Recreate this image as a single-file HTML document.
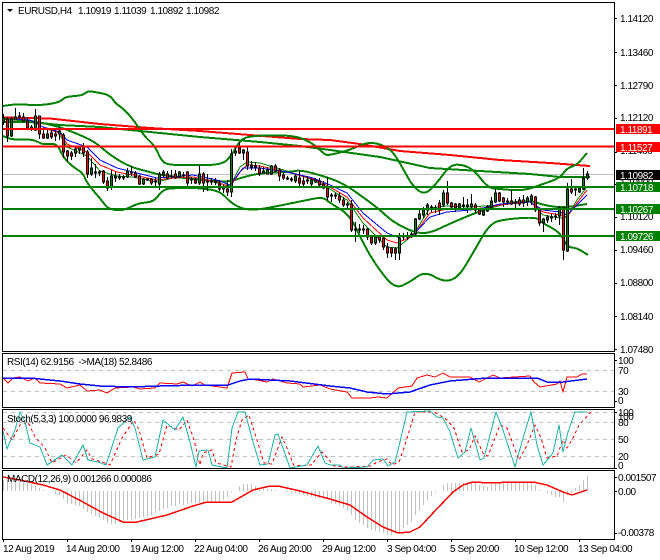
<!DOCTYPE html>
<html>
<head>
<meta charset="utf-8">
<style>
html,body{margin:0;padding:0;background:#fff}
svg{display:block}
text{font-family:"Liberation Sans",sans-serif;font-size:10px;letter-spacing:-.45px;fill:#000}
.l{fill:#fff}
</style>
</head>
<body>
<svg width="660" height="560" viewBox="0 0 660 560" xmlns="http://www.w3.org/2000/svg">
<rect width="660" height="560" fill="#fff"/>

<!-- bid line -->
<path d="M3 174.500H614" stroke="#c0c0c0" stroke-width="1" shape-rendering="crispEdges"/>

<g fill="none" stroke-linejoin="round" shape-rendering="crispEdges">
<!-- long MAs -->
<path stroke="#f00" stroke-width="2" d="M3 117.500L50 118.500 100 124 150 128 200 131 250 135 300 139 330 140 360 144 400 151 450 155 500 160 550 163 590 166"/>
<path stroke="#008000" stroke-width="2" d="M3 122L30 122 60 125 100 127 130 130 200 137 260 142 300 146 330 150 380 157 430 168 480 171 530 174 560 177 590 177"/>
<!-- Bollinger -->
<path stroke="#008000" stroke-width="2" d="M3 106Q15 104 22.500 104.500Q30 105 37.500 105Q45 105 52.500 103.500Q60 102 62.500 99.500Q65 97 70 96.500Q75 96 79 95.500Q83 95 85.500 93Q88 91 91.500 91.500Q95 92 102.500 93.500Q110 95 112.500 99Q115 103 120 106.500Q125 110 130 116Q135 122 140 129.500Q145 137 150 141.500Q155 146 158.500 154Q162 162 166 163.500Q170 165 180 165Q190 165 206 165Q222 165 227 160Q232 155 236 147.500Q240 140 245 138Q250 136 265 135.500Q280 135 290 136Q300 137 307.500 141Q315 145 320 150Q325 155 327.500 155Q330 155 340 152.500Q350 150 360 145.500Q370 141 380 144.500Q390 148 395 155.500Q400 163 406.500 175Q413 187 419 191Q425 195 431 189Q437 183 443.500 174Q450 165 456.500 164.700Q463 164.500 469 167.700Q475 171 481.500 179.500Q488 188 494 188.500Q500 189 511.500 190Q523 191 533 187.500Q543 184 551.500 181Q560 178 563.500 173Q567 168 572 166.500Q577 165 582 159L587 153"/>
<path stroke="#008000" stroke-width="2" d="M3 119Q30 120 45 123.500Q60 127 65 129Q70 131 75 133Q80 135 87.500 138.500Q95 142 102.500 148.500Q110 155 120 161Q130 167 140 169.500Q150 172 155 173.500Q160 175 180 177.500Q200 180 215 181Q230 182 235 180Q240 178 250 175.500Q260 173 275 172.500Q290 172 295 171Q300 170 310 172.500Q320 175 331.500 179Q343 183 355 191.500Q367 200 373.500 205Q380 210 386.500 216Q393 222 404 227.500Q415 233 422.500 233Q430 233 438.500 229Q447 225 458.500 220Q470 215 483.500 210Q497 205 513.500 202.500Q530 200 536.500 202.500Q543 205 553 206.500Q563 208 575 206L587 204"/>
<path stroke="#008000" stroke-width="2" d="M3 136Q10 140 21.500 139.500Q33 139 38 142Q43 145 50 144Q57 143 60 150Q63 157 68 162Q73 167 78 170Q83 173 85 178Q87 183 92 189Q97 195 100 198.500Q103 202 105.500 205.500Q108 209 115.500 210Q123 211 130.500 207Q138 203 146 202.500Q154 202 158.500 195.500Q163 189 170 188.500Q177 188 188.500 188Q200 188 210 189.500Q220 191 225 196.500Q230 202 236 205.500Q242 209 249.500 209.500Q257 210 270 207.500Q283 205 295 202.500Q307 200 315 198.500Q323 197 326.500 200Q330 203 340 209Q350 215 356.500 229Q363 243 370 255Q377 267 386 278Q395 289 402.500 285.500Q410 282 417.500 276.500Q425 271 434 276.500Q443 282 450.500 280Q458 278 465.500 265.500Q473 253 481.500 238Q490 223 498.500 221Q507 219 522 218Q537 217 539.500 220Q542 223 551 227.500Q560 232 563.500 239.500Q567 247 572 247.500Q577 248 582.500 251.500L588 255"/>
<!-- thin MAs -->
<path stroke="#008000" stroke-width="1" d="M60 135L67 147 87 156 100 171 117 176 133 177 157 182 173 178 193 177 217 183 230 186 240 167 247 162 260 163 287 171 313 180 330 189 347 200 363 223 387 247 397 248 413 235 430 208 447 206 470 207 500 205 530 201 543 215 560 218 567 217 577 200 587 187"/>
<path stroke="#f00" stroke-width="1" d="M43 128L60 133 67 144 87 152 100 165 117 172 133 175 157 180 173 178 193 177 217 182 230 187 240 172 247 165 260 166 287 172 313 179 330 187 347 197 363 218 387 240 397 243 413 236 430 213 447 209 470 209 483 208 500 205 530 202 543 212 560 215 567 217 577 203 587 190"/>
<path stroke="#00f" stroke-width="1" d="M15 119L30 120 43 127 60 132 67 140 87 147 100 160 117 168 133 172 157 178 173 177 193 175 217 180 230 185 243 168 260 168 287 172 313 178 330 185 347 193 363 213 387 233 397 237 413 235 430 217 447 212 470 210 483 208 500 204 530 202 543 210 560 212 567 215 577 205 587 195"/>
</g>

<!-- candle wicks -->
<path fill="none" stroke="#000" stroke-width="1" shape-rendering="crispEdges" d="M3.500 114V125M7.500 117V142M11.500 117V137M15.500 108V120M19.500 112V119M23.500 113V122M27.500 117V130M31.500 125V131M35.500 109V131M39.500 116V139M43.500 128V139M47.500 128V139M51.500 130V139M55.500 131V141M59.500 127V140M63.500 133V158M67.500 150V162M71.500 151V160M75.500 146V157M79.500 146V154M83.500 143V157M87.500 150V178M91.500 158V176M95.500 164V178M99.500 170V176M103.500 170V184M107.500 177V191M111.500 170V190M115.500 172V182M119.500 174V180M123.500 175V180M127.500 168V178M131.500 166V176M135.500 171V178M139.500 175V185M143.500 178V185M147.500 178V181M151.500 178V185M155.500 178V186M159.500 172V190M163.500 170V177M167.500 171V179M171.500 170V178M175.500 170V179M179.500 171V178M183.500 172V178M187.500 171V186M191.500 177V184M195.500 178V184M199.500 165V185M203.500 172V192M207.500 174V191M211.500 178V185M215.500 178V185M219.500 180V191M223.500 185V193M227.500 180V196M231.500 149V197M235.500 148V156M239.500 142V154M243.500 149V160M247.500 147V170M251.500 161V170M255.500 162V171M259.500 165V176M263.500 167V173M267.500 167V174M271.500 165V175M275.500 164V172M279.500 168V181M283.500 173V180M287.500 176V180M291.500 177V182M295.500 174V183M299.500 170V187M303.500 176V186M307.500 176V184M311.500 178V186M315.500 178V183M319.500 178V186M323.500 181V189M327.500 177V200M331.500 193V202M335.500 193V199M339.500 193V203M343.500 197V207M347.500 202V209M351.500 200V232M355.500 222V242M359.500 224V233M363.500 225V234M367.500 228V240M371.500 235V245M375.500 235V245M379.500 235V243M383.500 236V250M387.500 243V258M391.500 247V257M395.500 247V260M399.500 233V260M403.500 233V240M407.500 232V240M411.500 232V238M415.500 218V236M419.500 210V220M423.500 207V218M427.500 203V215M431.500 205V212M435.500 205V213M439.500 200V215M443.500 190V207M447.500 181V205M451.500 202V208M455.500 203V212M459.500 203V209M463.500 197V208M467.500 199V213M471.500 194V208M475.500 203V213M479.500 208V215M483.500 209V216M487.500 205V212M491.500 197V210M495.500 189V203M499.500 192V202M503.500 197V207M507.500 198V205M511.500 190V205M515.500 199V208M519.500 197V206M523.500 195V207M527.500 196V206M531.500 194V205M535.500 196V212M539.500 208V226M543.500 218V232M547.500 215V223M551.500 214V222M555.500 213V220M559.500 206V225M563.500 207V260M567.500 183V252M571.500 179V194M575.500 188V196M579.500 187V193M583.500 168V190M587.500 171V180"/>

<!-- red bodies -->
<path fill="#f00" stroke="#000" stroke-width="1" shape-rendering="crispEdges" d="M6.500 119h2v17h-2zM22.500 117h2v4h-2zM26.500 121h2v7h-2zM38.500 116h2v18h-2zM42.500 134h2v4h-2zM50.500 133h2v4h-2zM54.500 134h2v2h-2zM62.500 135h2v17h-2zM66.500 151h2v5h-2zM70.500 153h2v3h-2zM82.500 147h2v6h-2zM86.500 152h2v22h-2zM102.500 171h2v11h-2zM106.500 181h2v7h-2zM134.500 173h2v4h-2zM138.500 176h2v8h-2zM150.500 179h2v4h-2zM166.500 174h2v4h-2zM174.500 174h2v4h-2zM186.500 172h2v11h-2zM194.500 180h2v3h-2zM202.500 174h2v9h-2zM218.500 184h2v5h-2zM226.500 189h2v3h-2zM238.500 148h2v5h-2zM246.500 152h2v14h-2zM258.500 168h2v6h-2zM274.500 166h2v5h-2zM278.500 170h2v6h-2zM282.500 175h2v3h-2zM298.500 178h2v5h-2zM302.500 181h2v3h-2zM318.500 181h2v4h-2zM322.500 184h2v4h-2zM326.500 188h2v9h-2zM338.500 196h2v4h-2zM342.500 200h2v5h-2zM350.500 204h2v26h-2zM366.500 229h2v8h-2zM370.500 237h2v6h-2zM378.500 237h2v3h-2zM382.500 238h2v9h-2zM386.500 247h2v6h-2zM390.500 248h2v5h-2zM394.500 249h2v4h-2zM438.500 203h2v7h-2zM446.500 193h2v10h-2zM450.500 203h2v4h-2zM454.500 204h2v4h-2zM474.500 205h2v5h-2zM478.500 210h2v4h-2zM498.500 193h2v8h-2zM502.500 198h2v4h-2zM510.500 201h2v3h-2zM518.500 200h2v4h-2zM522.500 200h2v3h-2zM534.500 197h2v13h-2zM538.500 210h2v13h-2zM562.500 208h2v42h-2zM570.500 189h2v3h-2z"/>

<!-- green bodies -->
<path fill="#008000" stroke="#000" stroke-width="1" shape-rendering="crispEdges" d="M2.500 118h2v4h-2zM10.500 119h2v17h-2zM14.500 117h2v3h-2zM18.500 116h2v1h-2zM30.500 127h2v2h-2zM34.500 116h2v14h-2zM46.500 134h2v4h-2zM58.500 131h2v3h-2zM74.500 149h2v4h-2zM78.500 147h2v3h-2zM90.500 168h2v6h-2zM94.500 172h2v1h-2zM98.500 172h2v1h-2zM110.500 176h2v11h-2zM114.500 176h2v2h-2zM118.500 177h2v1h-2zM122.500 177h2v1h-2zM126.500 171h2v6h-2zM130.500 172h2v1h-2zM142.500 179h2v5h-2zM146.500 179h2v1h-2zM154.500 181h2v1h-2zM158.500 174h2v10h-2zM162.500 172h2v3h-2zM170.500 176h2v1h-2zM178.500 172h2v5h-2zM182.500 175h2v1h-2zM190.500 179h2v1h-2zM198.500 174h2v9h-2zM206.500 181h2v1h-2zM210.500 181h2v1h-2zM214.500 181h2v1h-2zM222.500 187h2v2h-2zM230.500 154h2v38h-2zM234.500 151h2v2h-2zM242.500 150h2v3h-2zM250.500 165h2v2h-2zM254.500 166h2v1h-2zM262.500 171h2v2h-2zM266.500 170h2v4h-2zM270.500 166h2v8h-2zM286.500 178h2v1h-2zM290.500 179h2v1h-2zM294.500 176h2v5h-2zM306.500 180h2v1h-2zM310.500 180h2v4h-2zM314.500 180h2v2h-2zM330.500 195h2v1h-2zM334.500 195h2v1h-2zM346.500 204h2v1h-2zM354.500 229h2v1h-2zM358.500 229h2v1h-2zM362.500 229h2v1h-2zM374.500 237h2v6h-2zM398.500 238h2v15h-2zM402.500 236h2v1h-2zM406.500 236h2v1h-2zM410.500 234h2v1h-2zM414.500 219h2v15h-2zM418.500 214h2v5h-2zM422.500 210h2v5h-2zM426.500 205h2v5h-2zM430.500 207h2v1h-2zM434.500 208h2v1h-2zM442.500 193h2v12h-2zM458.500 204h2v4h-2zM462.500 205h2v1h-2zM466.500 205h2v1h-2zM470.500 204h2v3h-2zM482.500 211h2v4h-2zM486.500 207h2v4h-2zM490.500 201h2v6h-2zM494.500 193h2v9h-2zM506.500 201h2v1h-2zM514.500 202h2v1h-2zM526.500 198h2v4h-2zM530.500 196h2v4h-2zM542.500 219h2v4h-2zM546.500 217h2v3h-2zM550.500 217h2v1h-2zM554.500 216h2v1h-2zM558.500 208h2v8h-2zM566.500 189h2v62h-2zM574.500 189h2v1h-2zM578.500 188h2v4h-2zM582.500 178h2v11h-2zM586.500 174h2v4h-2z"/>

<!-- horizontal levels -->
<g stroke-width="2" shape-rendering="crispEdges">
<path stroke="#f00" d="M3 129H614M3 146.500H614"/>
<path stroke="#008000" d="M3 187H614M3 209H614M3 236H614"/>
</g>

<!-- RSI -->
<path d="M3 370.500H614M3 391.500H614" stroke="#c0c0c0" stroke-dasharray="4 4" shape-rendering="crispEdges"/>
<g fill="none" stroke-linejoin="round" shape-rendering="crispEdges">
<path stroke="#f00" d="M3 378L8 383 13 378 20 377 28 381 35 378 40 383 60 384 67 388 80 385 87 391 100 390 107 393 115 388 133 387 140 389 155 388 160 383 177 384 183 382 192 386 200 382 205 385 227 388 232 373 245 372 248 379 257 380 267 382 273 379 287 383 300 384 303 387 320 385 330 389 347 392 352 398 370 398 378 397 387 398 398 388 412 386 417 378 427 375 435 377 443 373 450 377 470 377 479 382 493 375 500 378 530 376 534 382 540 387 557 384 560 381 563 392 567 377 577 377 582 374 587 374"/>
<path stroke="#00f" stroke-width="1.500" d="M3 378L30 378 60 381 80 384 100 386 130 387 160 386 200 385 228 385 240 381 250 379 290 381 330 386 350 388 367 392 387 394 410 392 430 385 450 381 487 378 537 378 547 382 563 382 587 379"/>
</g>

<!-- Stoch -->
<path d="M3 412.500H614M3 422.500H614M3 439.500H614M3 456.500H614" stroke="#c0c0c0" stroke-dasharray="4 4" shape-rendering="crispEdges"/>
<g fill="none" stroke-linejoin="round" shape-rendering="crispEdges">
<path stroke="#f00" stroke-dasharray="3 3" d="M3 428L12 440 20 425 28 422 35 437 45 448 52 463 66 455 76 463 87 450 92 459 102 462 110 465 122 438 134 420 139 430 147 458 159 454 167 425 179 430 187 420 194 440 200 465 203 453 212 450 216 463 231 467 236 440 242 420 249 415 257 440 264 463 272 464 279 445 282 437 287 448 294 466 311 465 322 452 329 460 334 466 347 467 371 466 377 462 387 459 392 465 399 462 404 448 411 425 415 412 434 412 441 416 447 420 454 428 462 452 469 450 475 436 484 455 488 456 500 425 507 428 519 460 527 445 535 425 541 438 547 458 557 456 563 440 567 448 572 440 579 425 591 412"/>
<path stroke="#20b2aa" stroke-width="1" d="M3 431L7 449 15 430 20 412 25 422 30 443 40 447 47 465 62 455 72 465 83 445 88 460 98 462 106 465 118 428 130 417 135 428 143 460 155 457 163 420 175 430 183 417 190 442 196 467 199 451 208 450 212 465 227 468 232 428 238 412 245 412 253 442 260 465 268 464 275 435 278 434 283 448 290 468 307 465 318 446 325 463 330 465 340 465 343 468 367 467 373 460 383 459 388 466 395 462 400 442 407 412 430 411 437 417 443 418 450 432 458 458 465 452 471 428 480 460 484 458 496 412 503 430 515 467 523 438 531 412 537 445 543 465 553 453 559 425 563 452 568 432 575 412 587 412"/>
</g>

<!-- MACD histogram -->
<path fill="none" stroke="#c0c0c0" stroke-width="1" shape-rendering="crispEdges" d="M3.500 491V480M7.500 491V480M11.500 491V480M15.500 491V480M19.500 491V482M23.500 491V483M27.500 491V483M31.500 491V484M35.500 491V486M39.500 491V488M43.500 491V490M55.500 491V494M59.500 491V495M63.500 491V499M67.500 491V503M71.500 491V504M75.500 491V505M79.500 491V506M83.500 491V509M87.500 491V512M91.500 491V514M95.500 491V516M99.500 491V518M103.500 491V520M107.500 491V523M111.500 491V524M115.500 491V524M119.500 491V522M123.500 491V521M127.500 491V520M131.500 491V520M135.500 491V519M139.500 491V518M143.500 491V517M147.500 491V517M151.500 491V515M155.500 491V513M159.500 491V511M163.500 491V509M167.500 491V508M171.500 491V506M175.500 491V506M179.500 491V504M183.500 491V505M187.500 491V504M191.500 491V503M195.500 491V503M199.500 491V503M203.500 491V503M207.500 491V502M211.500 491V503M215.500 491V503M219.500 491V503M223.500 491V500M227.500 491V497M231.500 491V492M239.500 491V486M243.500 491V484M247.500 491V484M251.500 491V484M255.500 491V486M259.500 491V487M263.500 491V488M267.500 491V489M271.500 491V489M275.500 491V490M287.500 491V492M291.500 491V493M295.500 491V493M299.500 491V494M303.500 491V495M307.500 491V496M311.500 491V497M315.500 491V498M319.500 491V498M323.500 491V499M327.500 491V499M331.500 491V503M335.500 491V504M339.500 491V505M343.500 491V508M347.500 491V510M351.500 491V515M355.500 491V520M359.500 491V523M363.500 491V525M367.500 491V528M371.500 491V530M375.500 491V531M379.500 491V532M383.500 491V533M387.500 491V535M391.500 491V535M395.500 491V533M399.500 491V532M403.500 491V528M407.500 491V525M411.500 491V522M415.500 491V515M419.500 491V511M423.500 491V505M427.500 491V500M431.500 491V496M435.500 491V492M443.500 491V485M447.500 491V483M451.500 491V483M455.500 491V483M459.500 491V483M463.500 491V483M467.500 491V482M471.500 491V483M475.500 491V483M479.500 491V485M483.500 491V486M487.500 491V487M491.500 491V483M495.500 491V483M499.500 491V483M503.500 491V483M507.500 491V483M511.500 491V483M515.500 491V483M519.500 491V483M523.500 491V483M527.500 491V483M531.500 491V483M535.500 491V485M539.500 491V490M547.500 491V493M551.500 491V495M555.500 491V497M559.500 491V497M563.500 491V502M567.500 491V495M571.500 491V493M575.500 491V488M579.500 491V485M583.500 491V480M587.500 491V476"/>
<path fill="none" stroke="#f00" stroke-width="1.500" stroke-linejoin="round" shape-rendering="crispEdges" d="M3 477L20 480 43 485 60 490 83 502 103 513 123 522 137 522 167 515 193 506 207 502 232 502 253 490 270 486 278 486 300 491 330 499 340 502 350 505 367 517 383 527 398 533 410 532 420 527 433 513 453 492 463 485 473 482 490 483 513 482 533 482 547 485 563 492 572 495 587 490"/>

<!-- frame -->
<g fill="none" stroke="#000" stroke-width="1" shape-rendering="crispEdges">
<path d="M2.500 2.500H614.500V351.500H2.500ZM2.500 353.500H614.500V407.500H2.500ZM2.500 409.500H614.500V468.500H2.500ZM2.500 470.500H614.500V539.500H2.500Z"/>
<path d="M614 18.500h3M614 52.500h3M614 85.500h3M614 118.500h3M614 152.500h3M614 184.500h3M614 217.500h3M614 250.500h3M614 283.500h3M614 316.500h3M614 349.500h3M614 360.500h3M614 401.500h3M614 412.500h3M614 468.500h3M614 477.500h3M614 491.500h3M614 533.500h3"/>
<path d="M3.500 539v3M67.500 539v3M131.500 539v3M195.500 539v3M259.500 539v3M323.500 539v3M387.500 539v3M451.500 539v3M515.500 539v3M579.500 539v3"/>
</g>

<!-- header -->
<path d="M7 9h6l-3 3z" fill="#000"/>
<text y="14"><tspan x="18">EURUSD,H4</tspan><tspan x="78">1.10919</tspan><tspan x="114">1.11039</tspan><tspan x="150">1.10892</tspan><tspan x="186">1.10982</tspan></text>
<text x="7" y="365" xml:space="preserve">RSI(14) 62.9156  -&gt;MA(18) 52.8486</text>
<text x="7" y="422">Stoch(5,3,3) 100.0000 96.9839</text>
<text x="7" y="482">MACD(12,26,9) 0.001266 0.000086</text>

<!-- price axis -->
<text x="620" y="22">1.14120</text>
<text x="620" y="56">1.13460</text>
<text x="620" y="89">1.12790</text>
<text x="620" y="121">1.12120</text>
<text x="620" y="154">1.11460</text>
<text x="620" y="186">1.10800</text>
<text x="620" y="220">1.10120</text>
<text x="620" y="253">1.09460</text>
<text x="620" y="286">1.08800</text>
<text x="620" y="320">1.08140</text>
<text x="620" y="353">1.07480</text>

<!-- labels -->
<g shape-rendering="crispEdges">
<rect x="616" y="124" width="44" height="10" fill="#f00"/>
<rect x="616" y="142" width="44" height="10" fill="#f00"/>
<rect x="616" y="170" width="44" height="10" fill="#000"/>
<rect x="616" y="182" width="44" height="10" fill="#008000"/>
<rect x="616" y="204" width="44" height="10" fill="#008000"/>
<rect x="616" y="231" width="44" height="10" fill="#008000"/>
</g>
<text class="l" x="620" y="133">1.11891</text>
<text class="l" x="620" y="151">1.11527</text>
<text class="l" x="620" y="179">1.10982</text>
<text class="l" x="620" y="191">1.10718</text>
<text class="l" x="620" y="213">1.10267</text>
<text class="l" x="620" y="240">1.09726</text>

<!-- sub axes -->
<text x="618" y="364">100</text>
<text x="618" y="374">70</text>
<text x="618" y="395">30</text>
<text x="618" y="404">0</text>
<text x="618" y="416">100</text>
<text x="618" y="420">100</text>
<text x="618" y="426">80</text>
<text x="618" y="443">50</text>
<text x="618" y="460">20</text>
<text x="618" y="469">0</text>
<text x="618" y="481">0.001507</text>
<text x="618" y="495">0.00</text>
<text x="618" y="536">-0.00378</text>

<!-- time axis -->
<text x="3" y="552">12 Aug 2019</text>
<text x="66" y="552">14 Aug 20:00</text>
<text x="130" y="552">19 Aug 12:00</text>
<text x="194" y="552">22 Aug 04:00</text>
<text x="258" y="552">26 Aug 20:00</text>
<text x="322" y="552">29 Aug 12:00</text>
<text x="387" y="552">3 Sep 04:00</text>
<text x="450" y="552">5 Sep 20:00</text>
<text x="514" y="552">10 Sep 12:00</text>
<text x="578" y="552">13 Sep 04:00</text>
</svg>
</body>
</html>
